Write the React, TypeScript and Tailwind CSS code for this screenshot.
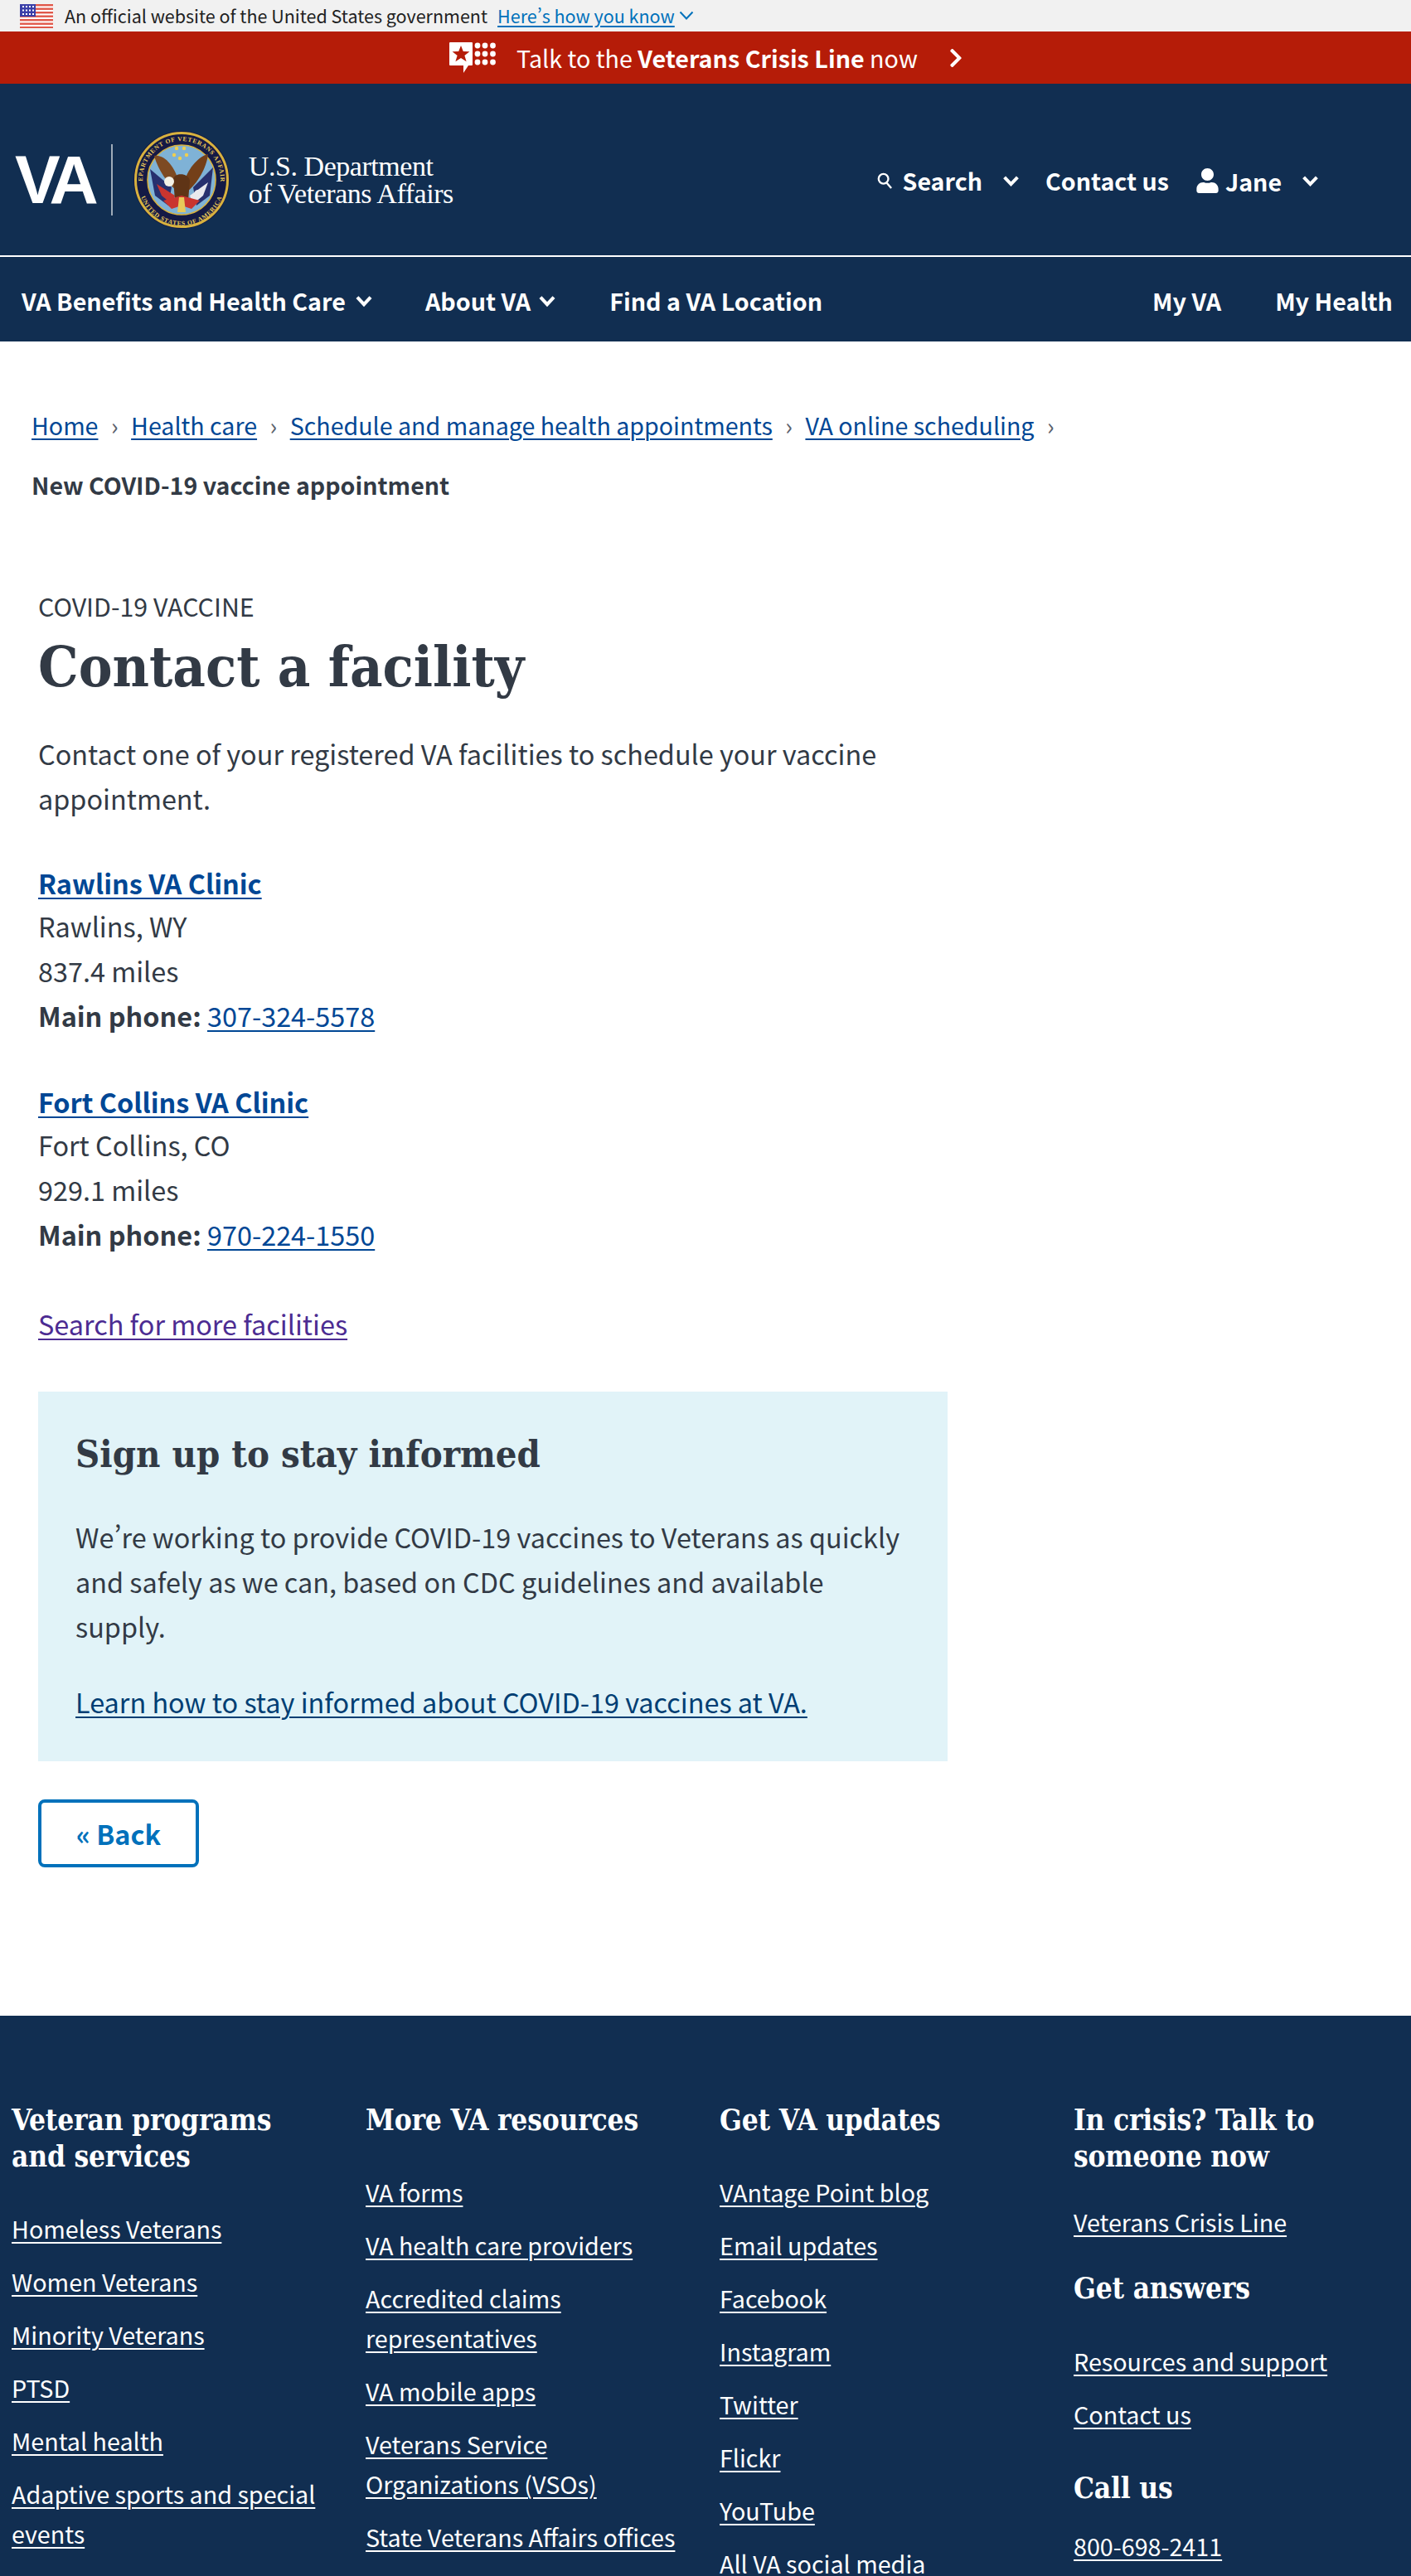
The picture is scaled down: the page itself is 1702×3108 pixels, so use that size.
import type { ReactNode } from 'react';
import { FaChevronRight, FaUser } from 'react-icons/fa';

const sans = "font-['Noto_Sans_CJK_SC','Source_Sans_Pro',sans-serif]";
const slab = "font-['DejaVu_Serif_Condensed','DejaVu_Serif',serif]";
const linkLine = 'underline decoration-2 underline-offset-[4px]';

function Chevron({ className, weight = 3.8 }: { className: string; weight?: number }) {
  return (
    <svg viewBox="0 0 20 14" className={className} fill="none" stroke="currentColor" strokeWidth={weight}>
      <path d="M2.5 2.5 10 10.5 17.5 2.5" />
    </svg>
  );
}

function Flag() {
  const stripes = [0, 1, 2, 3, 4, 5, 6];
  return (
    <svg viewBox="0 0 40 29" className="h-[29px] w-10 shrink-0">
      <rect width="40" height="29" fill="#fff" />
      {stripes.map((i) => (
        <rect key={i} y={i * 4.5} width="40" height="2.4" fill="#e0584a" />
      ))}
      <rect width="19" height="15" fill="#3a3fa8" />
      {[3, 7.5, 12].map((y) =>
        [3, 7, 11, 15].map((x) => <rect key={`${x}-${y}`} x={x} y={y - 1} width="2" height="2" fill="#fff" />),
      )}
    </svg>
  );
}

function CrisisIcon() {
  const dots = [576, 585, 594.5].flatMap((cx) => [58, 68, 78].map((cy) => ({ cx: cx - 542, cy: cy - 54 })));
  return (
    <svg viewBox="0 0 57 37" className="h-[37px] w-[57px] shrink-0">
      <path d="M1 0H27a1 1 0 0 1 1 1V27a1 1 0 0 1-1 1H23L17 37V28H1a1 1 0 0 1-1-1V1a1 1 0 0 1 1-1Z" fill="#fff" />
      <path
        d="M14 4 16.8 11 24.4 11.2 18.4 15.9 20.6 23.2 14 19 7.4 23.2 9.6 15.9 3.6 11.2 11.2 11Z"
        fill="#b51c08"
      />
      {dots.map((d) => (
        <circle key={`${d.cx}-${d.cy}`} cx={d.cx} cy={d.cy} r="3.4" fill="#fff" />
      ))}
    </svg>
  );
}

function Seal() {
  return (
    <svg viewBox="0 0 116 118" className="h-[118px] w-[116px] shrink-0">
      <defs>
        <path id="sealTop" d="M11 59a47 47 0 0 1 94 0" />
        <path id="sealBottom" d="M6 62a52 52 0 0 0 104 0" />
      </defs>
      <ellipse cx="58" cy="59" rx="58" ry="59" fill="#141a45" />
      <ellipse cx="58" cy="59" rx="55.5" ry="56.5" fill="none" stroke="#d8b23e" strokeWidth="3" />
      <ellipse cx="58" cy="59" rx="41" ry="42" fill="#7fb2d6" stroke="#d8b23e" strokeWidth="1.6" />
      <text fontSize="7.6" fontWeight="700" fill="#e8c95a" fontFamily="'Liberation Serif',serif" letterSpacing="0.7">
        <textPath href="#sealTop" startOffset="50%" textAnchor="middle">DEPARTMENT OF VETERANS AFFAIRS</textPath>
      </text>
      <text fontSize="7.6" fontWeight="700" fill="#e8c95a" fontFamily="'Liberation Serif',serif" letterSpacing="0.7">
        <textPath href="#sealBottom" startOffset="50%" textAnchor="middle">UNITED STATES OF AMERICA</textPath>
      </text>
      <path d="M20 46 46 68 42 90 26 78Z" fill="#27306e" />
      <path d="M96 44 72 68 76 90 92 78Z" fill="#27306e" />
      <path d="M28 64 50 78 46 88 34 78Z" fill="#c9352f" />
      <path d="M90 62 68 78 72 88 84 78Z" fill="#e9e9ee" />
      <path d="M25 30 C38 28 50 44 54 60 L50 70 C42 64 30 48 25 30Z" fill="#7d4a22" />
      <path d="M90 28 C80 30 66 44 62 60 L66 72 C76 64 88 46 90 28Z" fill="#744019" />
      <path d="M48 58 C50 50 66 50 68 60 L66 84 58 92 50 84Z" fill="#5f3416" />
      <circle cx="43" cy="61" r="6" fill="#f3f1e6" />
      <circle cx="78" cy="76" r="5" fill="#e9e9ee" />
      <path d="M36 84 58 78 80 84 70 94 58 90 46 94Z" fill="#c9352f" />
      <path d="M55 80h6l2 18h-10Z" fill="#e8c95a" />
      <g fill="#f0cf4e">
        <circle cx="52" cy="21" r="2.2" />
        <circle cx="61" cy="21" r="2.2" />
        <circle cx="49" cy="29" r="2.2" />
        <circle cx="64" cy="29" r="2.2" />
        <circle cx="56" cy="33" r="2.2" />
      </g>
    </svg>
  );
}

function FooterList({ items, className }: { items: string[]; className: string }) {
  return (
    <ul className={`flex flex-col gap-4 ${className}`}>
      {items.map((item) => (
        <li key={item}>
          <a href="#" className={linkLine}>{item}</a>
        </li>
      ))}
    </ul>
  );
}

function Heading({ children, className = '' }: { children: ReactNode; className?: string }) {
  return <h3 className={`${slab} text-[35px] font-bold leading-[44px] tracking-[-0.2px] ${className}`}>{children}</h3>;
}

function Facility({ name, place, miles, phone, className }: { name: string; place: string; miles: string; phone: string; className: string }) {
  return (
    <div className={className}>
      <a href="#" className={`block font-bold leading-[50px] text-[#004795] ${linkLine}`}>{name}</a>
      <p>{place}</p>
      <p>{miles}</p>
      <p>
        <strong className="font-bold">Main phone:</strong>{' '}
        <a href="#" className={`text-[#004795] ${linkLine}`}>{phone}</a>
      </p>
    </div>
  );
}

export default function App() {
  return (
    <div className={`h-[3108px] w-[1702px] overflow-hidden bg-white text-[#323a45] [font-feature-settings:'pwid'] ${sans}`}>
      <div className="flex h-[38px] items-center bg-[#f1f1f1] pl-6 text-[21.5px] leading-none">
        <Flag />
        <span className="ml-[14px] text-[#212121]">An official website of the United States government</span>
        <a href="#" className="ml-[12px] text-[#0071bb] underline underline-offset-[3px]">Here’s how you know</a>
        <Chevron weight={2} className="ml-[4px] h-[14px] w-[20px] text-[#0071bb]" />
      </div>

      <div className="flex h-[63px] items-center justify-center bg-[#b51c08] pl-[3px] text-[28.7px] text-white">
        <CrisisIcon />
        <span className="ml-[24px]">Talk to the <strong className="font-bold">Veterans Crisis Line</strong> now</span>
        <FaChevronRight className="ml-[36px] h-[26px] w-[20px]" />
      </div>

      <header className="flex h-[207px] items-center bg-[#112e51] pt-[24px] text-white">
        <span className="ml-[18px] pr-[7px] font-['Liberation_Sans',sans-serif] text-[82px] font-bold leading-[90px] tracking-[-7px]">VA</span>
        <span className="ml-[15px] h-[86px] w-[2px] bg-white/60" />
        <span className="ml-[25px]"><Seal /></span>
        <span className="ml-[23px] font-['Liberation_Serif',serif] text-[34px] leading-[33px] tracking-[-0.45px]">
          U.S. Department<br />of Veterans Affairs
        </span>
        <div className="ml-auto mt-[3px] flex items-center pr-[111px] text-[28.6px] font-bold leading-none">
          <svg viewBox="0 0 20 22" className="h-[20px] w-[18px]" fill="none" stroke="currentColor" strokeWidth="2.6">
            <circle cx="8.5" cy="8.5" r="6.5" />
            <path d="m13 14 6 7" />
          </svg>
          <span className="ml-[13px]">Search</span>
          <Chevron className="ml-[24px] h-[15px] w-[21px]" />
          <span className="ml-[31px]">Contact us</span>
          <FaUser className="ml-[33px] h-[30px] w-[27px]" />
          <span className="ml-[8px] mt-[3px]">Jane</span>
          <Chevron className="ml-[24px] h-[15px] w-[21px]" />
        </div>
      </header>
      <div className="h-[2px] bg-white" />

      <nav className="flex h-[102px] items-center bg-[#112e51] pl-[26px] pr-[22px] pt-[4px] text-[28.7px] font-bold leading-none text-white">
        <span>VA Benefits and Health Care</span>
        <Chevron className="ml-[11px] h-[15px] w-[22px]" />
        <span className="ml-[63px]">About VA</span>
        <Chevron className="ml-[9px] h-[15px] w-[22px]" />
        <span className="ml-[64px]">Find a VA Location</span>
        <span className="ml-auto">My VA</span>
        <span className="ml-[65px]">My Health</span>
      </nav>

      <div className="flex flex-wrap items-center pl-[38px] pt-[65px] text-[28.6px] leading-[72px]">
        {['Home', 'Health care', 'Schedule and manage health appointments', 'VA online scheduling'].map((crumb) => (
          <span key={crumb} className="flex items-center">
            <a href="#" className={`text-[#004795] ${linkLine}`}>{crumb}</a>
            <span className="mx-[15.5px] text-[#5b616b]">›</span>
          </span>
        ))}
        <strong className="w-full font-bold">New COVID-19 vaccine appointment</strong>
      </div>

      <main className="pl-[46px] text-[32.4px] leading-[54px]">
        <p className="mt-[90px] text-[30.4px] leading-[40px]">COVID-19 VACCINE</p>
        <h1 className={`${slab} mt-[13px] text-[68px] font-bold leading-[80px]`}>Contact a facility</h1>
        <p className="mt-[38px] w-[1097px]">
          Contact one of your registered VA facilities to schedule your vaccine appointment.
        </p>

        <Facility name="Rawlins VA Clinic" place="Rawlins, WY" miles="837.4 miles" phone="307-324-5578" className="mt-[50px]" />
        <Facility name="Fort Collins VA Clinic" place="Fort Collins, CO" miles="929.1 miles" phone="970-224-1550" className="mt-[52px]" />

        <a href="#" className={`mt-[54px] block text-[#4c2c92] ${linkLine}`}>Search for more facilities</a>

        <section className="mt-[55px] w-[1097px] bg-[#e1f3f8] px-[45px] pb-[45px] pt-[46px]">
          <h2 className={`${slab} text-[45px] font-bold leading-[60px]`}>Sign up to stay informed</h2>
          <p className="mt-[42px]">
            We’re working to provide COVID-19 vaccines to Veterans as quickly and safely as we can, based on CDC guidelines and available supply.
          </p>
          <a href="#" className={`mt-[37px] block text-[#003e73] ${linkLine}`}>Learn how to stay informed about COVID-19 vaccines at VA.</a>
        </section>

        <button className="mt-[46px] block h-[82px] w-[194px] rounded-lg border-4 border-[#0071bb] text-center font-bold text-[#0071bb]">« Back</button>
      </main>

      <footer className="mt-[179px] bg-[#112e51] pl-[14px] pt-[104px] text-[28.7px] leading-[48px] text-white">
        <div className="grid grid-cols-[repeat(4,397px)] gap-x-[30px]">
          <div>
            <Heading>Veteran programs<br />and services</Heading>
            <FooterList
              className="mt-[41px]"
              items={['Homeless Veterans', 'Women Veterans', 'Minority Veterans', 'PTSD', 'Mental health', 'Adaptive sports and special events']}
            />
          </div>
          <div>
            <Heading>More VA resources</Heading>
            <FooterList
              className="mt-[41px]"
              items={['VA forms', 'VA health care providers', 'Accredited claims representatives', 'VA mobile apps', 'Veterans Service Organizations (VSOs)', 'State Veterans Affairs offices']}
            />
          </div>
          <div>
            <Heading>Get VA updates</Heading>
            <FooterList
              className="mt-[41px]"
              items={['VAntage Point blog', 'Email updates', 'Facebook', 'Instagram', 'Twitter', 'Flickr', 'YouTube', 'All VA social media']}
            />
          </div>
          <div>
            <Heading>In crisis? Talk to someone now</Heading>
            <FooterList className="mt-[33px]" items={['Veterans Crisis Line']} />
            <Heading className="mt-[34px]">Get answers</Heading>
            <FooterList className="mt-[42px]" items={['Resources and support', 'Contact us']} />
            <Heading className="mt-[43px]">Call us</Heading>
            <FooterList className="mt-[24px]" items={['800-698-2411']} />
          </div>
        </div>
      </footer>
    </div>
  );
}
